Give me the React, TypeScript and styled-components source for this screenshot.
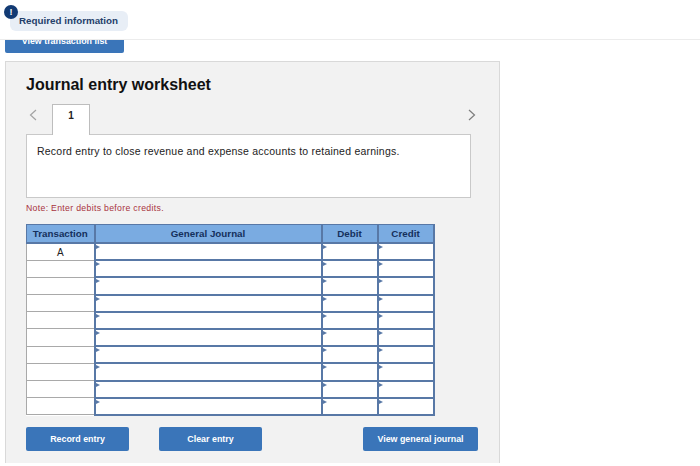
import React from "react";
import styled, { createGlobalStyle } from "styled-components";

const GlobalStyle = createGlobalStyle`
  html, body {
    margin: 0;
    padding: 0;
    background: #fff;
    font-family: "Liberation Sans", Arial, sans-serif;
  }
`;

const Page = styled.div`
  width: 700px;
  height: 466px;
  overflow: hidden;
  display: flex;
  flex-direction: column;
`;

const TopBar = styled.div`
  height: 40px;
  flex: none;
  box-sizing: border-box;
  padding: 11px 0 0 10px;
  border-bottom: 1px solid #ececec;
`;

const InfoPill = styled.div`
  position: relative;
  width: 118px;
  height: 20px;
  box-sizing: border-box;
  padding-left: 9px;
  background: #e8eef6;
  border-radius: 6px;
  color: #243f6b;
  font-size: 9.8px;
  font-weight: 700;
  line-height: 20px;
`;

const InfoBadge = styled.span`
  position: absolute;
  left: -6px;
  top: -6px;
  width: 14px;
  height: 14px;
  border-radius: 50%;
  background: #123a73;
  color: #fff;
  font-size: 9px;
  font-weight: 700;
  line-height: 14px;
  text-align: center;
`;

const ClippedStrip = styled.div`
  height: 13px;
  flex: none;
  padding-left: 5px;
  overflow: hidden;
  display: flex;
  align-items: flex-end;
`;

const ListButton = styled.div`
  width: 119px;
  height: 24px;
  flex: none;
  background: #3a75b9;
  border-radius: 2px;
  color: #fff;
  font-size: 8.9px;
  font-weight: 700;
  line-height: 25px;
  text-align: center;
`;

const Panel = styled.section`
  width: 495px;
  height: 402px;
  flex: none;
  box-sizing: border-box;
  margin: 8px 0 0 5px;
  padding: 14px 28px 0 20px;
  background: #f2f2f2;
  border: 1px solid #d9d9d9;
  border-bottom: none;
`;

const Title = styled.h1`
  margin: 0;
  color: #111;
  font-size: 16px;
  font-weight: 700;
  line-height: 18px;
`;

const TabRow = styled.div`
  display: flex;
  align-items: flex-end;
  height: 30px;
  margin-top: 10px;
`;

const Arrow = styled.button<{ $right?: boolean }>`
  width: 26px;
  height: 30px;
  padding: ${(p) => (p.$right ? "0" : "0 0 0 3px")};
  border: 0;
  background: none;
  display: flex;
  align-items: center;
  justify-content: ${(p) => (p.$right ? "flex-end" : "flex-start")};
  margin-left: ${(p) => (p.$right ? "auto" : "0")};
  margin-right: ${(p) => (p.$right ? "-5px" : "0")};
  svg {
    display: block;
    margin-bottom: 8px;
  }
`;

const Tab = styled.div`
  width: 38px;
  height: 31px;
  box-sizing: border-box;
  background: #fff;
  border: 1px solid #bdbdbd;
  border-bottom: none;
  color: #222;
  font-size: 10px;
  font-weight: 700;
  line-height: 22px;
  text-align: center;
  margin-bottom: -1px;
  position: relative;
  z-index: 1;
`;

const PromptBox = styled.div`
  width: 445px;
  height: 64px;
  box-sizing: border-box;
  background: #fff;
  border: 1px solid #c9c9c9;
  padding: 9px 10px 0;
  color: #222;
  font-size: 10.5px;
  line-height: 14px;
  letter-spacing: 0.22px;
`;

const Note = styled.p`
  margin: 5px 0 0;
  color: #a8323e;
  font-size: 8.7px;
  line-height: 11px;
  letter-spacing: 0.32px;
`;

const Sheet = styled.table`
  width: 408px;
  margin-top: 10px;
  border-collapse: collapse;
  table-layout: fixed;
  background: #fff;
`;

const HeadCell = styled.th`
  height: 17px;
  padding: 0;
  background: #7aabe1;
  border: 1px solid #5878a6;
  border-bottom: 2px solid #5878a6;
  border-right-width: 2px;
  color: #15305c;
  font-size: 9.8px;
  font-weight: 700;
  text-align: center;
`;

const RefCell = styled.td`
  height: 15.2px;
  box-sizing: border-box;
  padding: 2px 0 0;
  border: 1px solid #a9a9a9;
  border-right: 2px solid #5878a6;
  color: #222;
  font-size: 10px;
  line-height: 13px;
  text-align: center;
  vertical-align: top;
`;

const EntryCell = styled.td`
  position: relative;
  height: 15.2px;
  padding: 0;
  border: 2px solid #5878a6;
  &::before {
    content: "";
    position: absolute;
    left: 0;
    top: 1px;
    border-left: 4px solid #5878a6;
    border-top: 2.5px solid transparent;
    border-bottom: 2.5px solid transparent;
  }
`;

const ActionRow = styled.div`
  display: flex;
  gap: 30px;
  margin-top: 11px;
  width: 452px;
`;

const ActionButton = styled.button<{ $width: number; $push?: boolean }>`
  width: ${(p) => p.$width}px;
  height: 24px;
  padding: 0;
  border: 0;
  border-radius: 2px;
  background: #3a75b9;
  color: #fff;
  font-family: inherit;
  font-size: 8.9px;
  font-weight: 700;
  margin-left: ${(p) => (p.$push ? "auto" : "0")};
`;

const Chevron = ({ dir }: { dir: "left" | "right" }) => (
  <svg width="8" height="12" viewBox="0 0 8 12" fill="none">
    <path
      d={dir === "left" ? "M7 1 L1.5 6 L7 11" : "M1 1 L6.5 6 L1 11"}
      stroke={dir === "left" ? "#a3a3a3" : "#7d7d7d"}
      strokeWidth="1.2"
    />
  </svg>
);

const rows = ["A", "", "", "", "", "", "", "", "", ""];

export default function App() {
  return (
    <Page>
      <GlobalStyle />
      <TopBar>
        <InfoPill>
          <InfoBadge>!</InfoBadge>
          Required information
        </InfoPill>
      </TopBar>
      <ClippedStrip>
        <ListButton>View transaction list</ListButton>
      </ClippedStrip>
      <Panel>
        <Title>Journal entry worksheet</Title>
        <TabRow>
          <Arrow aria-label="Previous">
            <Chevron dir="left" />
          </Arrow>
          <Tab>1</Tab>
          <Arrow $right aria-label="Next">
            <Chevron dir="right" />
          </Arrow>
        </TabRow>
        <PromptBox>
          Record entry to close revenue and expense accounts to retained earnings.
        </PromptBox>
        <Note>Note: Enter debits before credits.</Note>
        <Sheet>
          <colgroup>
            <col width="68" />
            <col width="227" />
            <col width="56" />
            <col width="56" />
          </colgroup>
          <thead>
            <tr>
              <HeadCell>Transaction</HeadCell>
              <HeadCell>General Journal</HeadCell>
              <HeadCell>Debit</HeadCell>
              <HeadCell>Credit</HeadCell>
            </tr>
          </thead>
          <tbody>
            {rows.map((ref, i) => (
              <tr key={i}>
                <RefCell>{ref}</RefCell>
                <EntryCell />
                <EntryCell />
                <EntryCell />
              </tr>
            ))}
          </tbody>
        </Sheet>
        <ActionRow>
          <ActionButton $width={103}>Record entry</ActionButton>
          <ActionButton $width={103}>Clear entry</ActionButton>
          <ActionButton $width={115} $push>
            View general journal
          </ActionButton>
        </ActionRow>
      </Panel>
    </Page>
  );
}
